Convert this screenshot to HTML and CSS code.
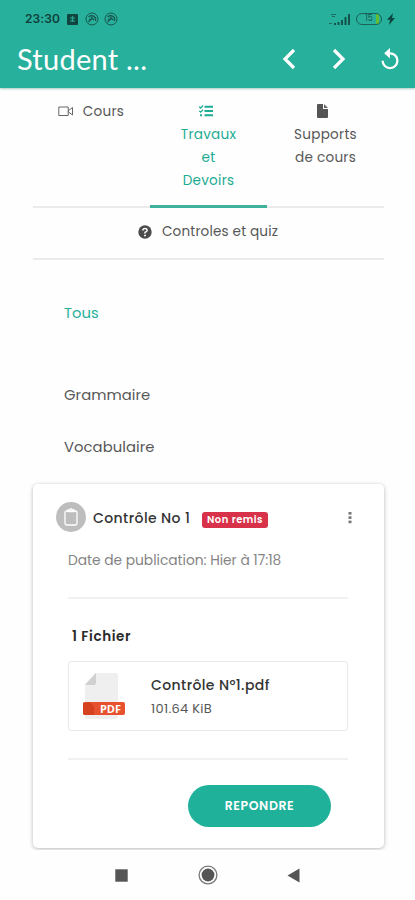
FILE: index.html
```
<!DOCTYPE html>
<html lang="fr">
<head>
<meta charset="utf-8">
<meta name="viewport" content="width=device-width, initial-scale=1">
<title>Student</title>
<link rel="stylesheet" href="styles.css">
</head>
<body>
<header class="top">
  <div class="status">
    <span class="clock">23:30</span>
    <svg class="st-app" width="11" height="11" viewBox="0 0 11 11"><rect width="11" height="11" rx="1" fill="#10443f"/><path d="M3 4h5M3 7h5M5.500 2v6" stroke="#27a793" stroke-width="1.200"/></svg>
    <svg class="st-round" width="14" height="14" viewBox="0 0 14 14" fill="none" stroke="#17564e"><circle cx="7" cy="7" r="6"/><path d="M3.500 5q4-3 7 1v3M3.500 10l4-4M6 5l3 3M4 7l2 1" stroke-width="1.300"/></svg>
    <svg class="st-round" width="14" height="14" viewBox="0 0 14 14" fill="none" stroke="#17564e"><circle cx="7" cy="7" r="6"/><path d="M3.500 5q4-3 7 1v3M3.500 10l4-4M6 5l3 3M4 7l2 1" stroke-width="1.300"/></svg>
    <svg class="signal" width="23" height="13" viewBox="0 0 23 13"><path d="M3 1h5v1H3zM4 3h3v1H4zM1 10h3v1H1z" fill="#1b6b60"/><path d="M6 10h2v2H6zM9.500 9h2v3h-2zM13 7h2v5h-2zM16.500 4h2v8h-2zM20 1h2v11h-2z" fill="#14524b"/></svg>
    <span class="battery"><span class="pct">15</span></span>
    <svg class="bolt" width="8" height="12" viewBox="0 0 8 12"><path d="M6 0L0 6.800h3L2 12l6-7H5z" fill="#0d4540"/></svg>
  </div>
  <div class="bar">
    <h1>Student <span>...</span></h1>
    <svg class="back" width="14" height="22" viewBox="0 0 14 22"><path d="M12 2L3 11l9 9" fill="none" stroke="#fff" stroke-width="3.200"/></svg>
    <svg class="next" width="14" height="22" viewBox="0 0 14 22"><path d="M2 2l9 9-9 9" fill="none" stroke="#fff" stroke-width="3.200"/></svg>
    <svg class="reload" width="20" height="22" viewBox="0 0 20 22"><path d="M9.500 5.300A7.400 7.400 0 1 1 2.600 12.700" fill="none" stroke="#fff" stroke-width="2.300"/><path d="M10 0v10.500L4.200 5.200z" fill="#fff"/></svg>
  </div>
</header>
<main>
  <nav class="tabs">
    <a class="tab"><svg class="cam" width="16" height="11" viewBox="0 0 16 11" fill="none" stroke="#666"><path d="M.8 1h9.400v8.500H.8zM10.500 4.500L14.500 1.500v7.500l-4-3z"/></svg><span>Cours</span></a>
    <a class="tab active"><svg class="list" width="14" height="12" viewBox="0 0 14 12" fill="none" stroke="#1cab93"><path d="M5.500 1.800H14M5.500 6H14M5.500 10.300H14" stroke-width="1.900"/><path d="M.3 1.800l1.300 1.200L4 .5M.3 6l1.300 1.200L4 4.700" stroke-width="1.300"/><path d="M1 10.300h2" stroke-width="2"/></svg><span>Travaux</span><span>et</span><span>Devoirs</span></a>
    <a class="tab"><svg class="doc" width="11" height="14" viewBox="0 0 11 14"><path d="M1 0h5v5h5v8q0 1-1 1H1q-1 0-1-1V1q0-1 1-1z" fill="#555"/><path d="M7 0l4 4H7z" fill="#666"/></svg><span>Supports</span><span>de cours</span></a>
    <a class="tab wide"><svg width="14" height="14" viewBox="0 0 14 14"><circle cx="7" cy="7" r="6.700" fill="#4b4b4b"/><path d="M4.800 5.500Q5 3.500 7 3.500t2.200 1.800Q9.200 6.600 7 7.400V8.500" fill="none" stroke="#fff" stroke-width="1.500"/><circle cx="7" cy="10.500" r=".95" fill="#fff"/></svg><span>Controles et quiz</span></a>
  </nav>
  <ul class="filters">
    <li class="on">Tous</li>
    <li class="gram">Grammaire</li>
    <li>Vocabulaire</li>
  </ul>
  <article class="card">
    <div class="head">
      <span class="avatar"><svg width="18" height="20" viewBox="0 0 18 20" fill="none" stroke="#fff" stroke-width="1.300"><rect x="3" y="4" width="12" height="14" rx="1.500"/><path d="M6 4.500V3h1.500q1.500-2.500 3 0H12v1.500z"/></svg></span>
      <h2>Contrôle No 1</h2>
      <span class="badge">Non remis</span>
      <svg class="more" width="4" height="13" viewBox="0 0 4 13" fill="#777"><rect x=".5" y="1" width="3" height="2.600"/><rect x=".5" y="5.300" width="3" height="2.600"/><rect x=".5" y="9.600" width="3" height="2.600"/></svg>
    </div>
    <p class="date">Date de publication: Hier à 17:18</p>
    <h3>1 Fichier</h3>
    <div class="file">
      <svg width="44" height="50" viewBox="0 0 44 50"><path d="M13 1h21q2 0 2 2v42q0 2-2 2H5q-2 0-2-2V12z" fill="#efefef"/><path d="M3 13L14 1v10q0 2-2 2z" fill="#d0d0d0"/><rect x="1" y="30" width="42" height="13" rx="2" fill="#e7512d"/><path d="M1 31l7-1 4 5v8H3q-2 0-2-2z" fill="#d5421f"/><text class="pdf" x="18" y="40.500" textLength="21">PDF</text></svg>
      <div class="meta"><strong>Contrôle N°1.pdf</strong><span>101.64 KiB</span></div>
    </div>
    <div class="foot"><button>REPONDRE</button></div>
  </article>
</main>
<footer class="sys">
  <svg width="13" height="13" viewBox="0 0 13 13"><rect x=".3" y=".3" width="12.400" height="12.400" fill="#555"/></svg>
  <svg width="20" height="20" viewBox="0 0 20 20"><circle cx="10" cy="10" r="8.900" fill="none" stroke="#777" stroke-width="1.300"/><circle cx="10" cy="10" r="6.400" fill="#555"/></svg>
  <svg class="tri" width="13" height="15" viewBox="0 0 13 15"><path d="M12.500.5v14L.5 7.500z" fill="#555"/></svg>
</footer>
</body>
</html>
```
FILE: styles.css
```
* { box-sizing: border-box; }
body {
  margin: 0;
  width: 415px;
  height: 900px;
  overflow: hidden;
  display: flex;
  flex-direction: column;
  background: #fefefe;
  color: #575757;
  font-family: Poppins, Inter, sans-serif;
  font-size: 14px;
}
svg { display: block; flex: none; }
h1, h2, h3, p, ul { margin: 0; padding: 0; font-weight: 400; }
.top { flex: none; height: 88px; background: #27b09b; box-shadow: 0 1px 2px #a9c9c3; }
.status { display: flex; align-items: center; height: 38px; padding-left: 25px; color: #103f3b; }
.clock { width: 36px; font: 600 12px/38px Inter, sans-serif; letter-spacing: .1px; margin-right: 6px; }
.st-app { margin-right: 7px; }
.st-round { margin-right: 5px; }
.signal { margin-left: auto; }
.battery { width: 26px; height: 12px; margin: 0 5px 0 5px; border: 1.500px solid #196359; border-radius: 6px; display: flex; align-items: center; justify-content: center; background: linear-gradient(90deg, transparent 19px, #62bd32 19px, #62bd32 22px, transparent 22px); }
.pct { font-size: 8px; color: #17564e; line-height: 8px; }
.bolt { margin-right: 20px; }
.bar { display: flex; align-items: center; height: 42px; padding-left: 17px; color: #fff; }
h1 { width: 265px; font: 400 29px/42px "Museo Slab", Museo, Lato, sans-serif; white-space: nowrap; letter-spacing: .25px; }
.next { margin-left: 36px; }
.reload { margin-left: 34px; }
main { flex: none; height: 762px; padding: 0 31px 0 33px; }
.tabs { display: grid; grid-template-columns: repeat(3, 117px); }
.tab { display: flex; flex-direction: column; align-items: center; height: 120px; padding-top: 12px; border-bottom: 2px solid #ebebeb; font-size: 13.600px; line-height: 23px; letter-spacing: .25px; }
.tab:first-child { flex-direction: row; align-items: flex-start; justify-content: center; gap: 9px; padding-right: 1px; }
.cam { margin-top: 6px; }
.list { margin: 5px 6px 6px 0; }
.doc { margin: 4px 6px 5px 0; }
.active { color: #1cab93; border-bottom: 3px solid #3fb19d; }
.wide { grid-column: 1 / -1; flex-direction: row; justify-content: center; align-items: flex-start; gap: 10px; height: 52px; padding-top: 12px; padding-right: 1px; letter-spacing: .15px; }
.wide svg { margin-top: 5px; }
.filters { list-style: none; margin: 41px 0 0 31px; font-size: 14.800px; line-height: 24px; letter-spacing: .05px; }
.on { color: #27b09b; margin-bottom: 58px; }
.gram { margin-bottom: 28px; }
.card { height: 364px; margin-top: 25px; border-radius: 5px; background: #fff; box-shadow: 0 1px 4px rgba(0, 0, 0, .28); padding: 0 36px; }
.head { display: flex; align-items: center; height: 66px; margin-left: -13px; }
.avatar { width: 30px; height: 30px; border-radius: 50%; background: #bdbdbd; display: flex; align-items: center; justify-content: center; margin-right: 7px; }
h2 { color: #333; font-size: 14px; font-weight: 500; letter-spacing: .42px; width: 109px; white-space: nowrap; margin-top: 3px; }
.badge { width: 66px; height: 16px; margin-top: 5px; border-radius: 3px; background: #d8314a; color: #fff; font-size: 10px; font-weight: 600; line-height: 15px; text-align: center; letter-spacing: .5px; white-space: nowrap; }
.more { margin-left: auto; margin-right: -4px; }
.date { height: 49px; margin-left: -1px; padding-top: 1px; border-bottom: 2px solid #f1f1f1; font-size: 13.800px; line-height: 20px; color: #848484; white-space: nowrap; letter-spacing: -.02px; }
h3 { margin: 28px 0 14px 3px; color: #2a2a2a; font-size: 13.500px; font-weight: 600; line-height: 20px; letter-spacing: .6px; }
.file { display: flex; height: 70px; padding: 10px 0 0 13px; margin-left: -1px; border: 1.500px solid #e9e9e9; border-radius: 3px; }
.meta { display: flex; flex-direction: column; margin-left: 25px; margin-top: 1px; line-height: 24px; letter-spacing: .4px; }
.meta strong { font-weight: 500; color: #333; }
.meta span { font-size: 13px; letter-spacing: .3px; }
.pdf { font: 700 11px "Open Sans", sans-serif; fill: #fff; }
.foot { margin-top: 27px; margin-left: -1px; padding-top: 25px; border-top: 2px solid #f1f1f1; }
button { display: block; width: 143px; height: 42px; margin: 0 17px 0 auto; padding: 0; border: 0; border-radius: 21px; background: #20b19b; color: #fff; font: 600 12.500px Poppins, Inter, sans-serif; letter-spacing: .6px; }
.sys { flex: none; height: 50px; display: flex; align-items: center; justify-content: center; gap: 70px; background: #fefefe; }
.tri { margin-left: -1px; }
```
